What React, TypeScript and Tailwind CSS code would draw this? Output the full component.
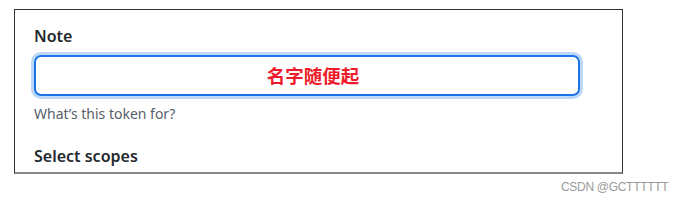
import React from "react";

export default function App() {
  return (
    <div className="w-[681px] h-[201px] bg-white relative overflow-hidden" style={{ fontFamily: '"Noto Sans", "Open Sans", sans-serif' }}>
      <div className="pt-[9px] pl-[14px]">
        <div className="w-[609px] h-[165px] border border-[#333] border-b-2 border-b-[#888] overflow-hidden pl-[19px] pr-[42px]">
          <div className="pt-[16px] text-[16px] font-semibold text-[#24292f] leading-[21px]">Note</div>
          <div className="mt-[8px] h-[41px] rounded-[7px] border-2 border-[#1a73e8] shadow-[0_0_0_3px_#bcd7f7] flex items-center justify-center pl-[12px]">
            <span className="text-[18.5px] font-bold text-[#ee1c2b] leading-none" style={{ fontFamily: '"Noto Sans CJK SC", sans-serif' }}>名字随便起</span>
          </div>
          <div className="mt-[9px] text-[14px] text-[#57606a] leading-[18px]">What’s this token for?</div>
          <div className="mt-[23px] text-[16px] font-semibold text-[#24292f] leading-[21px]">Select scopes</div>
        </div>
      </div>
      <div className="absolute left-[561px] top-[179px] text-[12px] text-[#9a9a9a] leading-[16px] tracking-[-0.3px]" style={{ fontFamily: '"Liberation Sans", Arial, sans-serif' }}>CSDN @GCTTTTTT</div>
    </div>
  );
}
